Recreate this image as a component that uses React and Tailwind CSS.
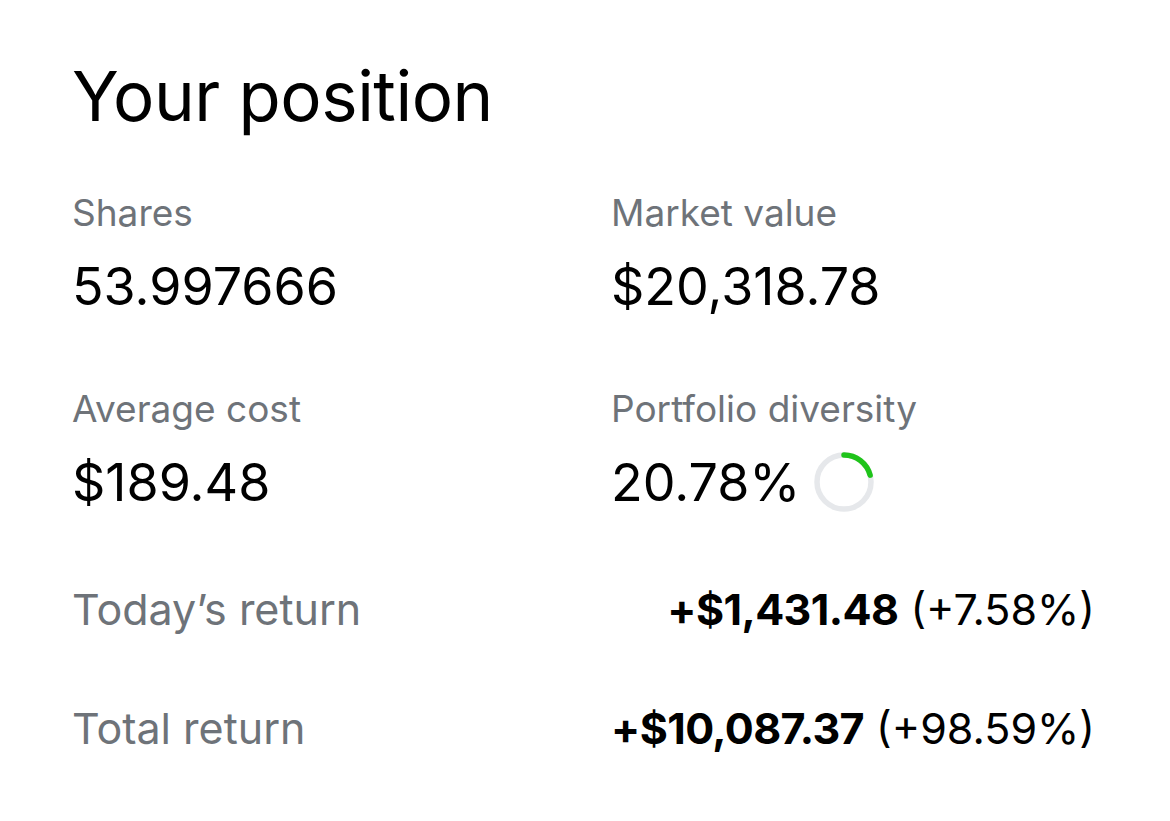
import React from "react";

function Donut() {
  const r = 27;
  const c = 2 * Math.PI * r;
  const pct = 0.2078;
  return (
    <svg width="60" height="60" viewBox="0 0 60 60" className="ml-[14px] -mt-[3px] shrink-0">
      <circle cx="30" cy="30" r={r} fill="none" stroke="#e6e8eb" strokeWidth="5.5" />
      <circle
        cx="30"
        cy="30"
        r={r}
        fill="none"
        stroke="#1fc41a"
        strokeWidth="5.5"
        strokeLinecap="round"
        strokeDasharray={`${c * pct} ${c}`}
        transform="rotate(-90 30 30)"
      />
    </svg>
  );
}

export default function App() {
  return (
    <div className="w-[1170px] h-[821px] bg-white text-black pl-[72px] pr-[75px] pt-[56px] font-['Inter',sans-serif]">
      <h1 className="text-[69px] leading-[80px] font-normal tracking-[-0.5px]">Your position</h1>
      <div className="grid grid-cols-[539px_1fr] mt-[55px]">
        <div>
          <div className="text-[37px] leading-[44px] text-[#6e7379]">Shares</div>
          <div className="text-[52px] leading-[60px] mt-[22px]">53.997666</div>
        </div>
        <div>
          <div className="text-[37px] leading-[44px] text-[#6e7379]">Market value</div>
          <div className="text-[52px] leading-[60px] mt-[22px]">$20,318.78</div>
        </div>
        <div className="mt-[70px]">
          <div className="text-[37px] leading-[44px] text-[#6e7379]">Average cost</div>
          <div className="text-[52px] leading-[60px] mt-[22px]">$189.48</div>
        </div>
        <div className="mt-[70px]">
          <div className="text-[37px] leading-[44px] text-[#6e7379]">Portfolio diversity</div>
          <div className="flex items-center mt-[22px] h-[60px]">
            <span className="text-[52px] leading-[60px]">20.78%</span>
            <Donut />
          </div>
        </div>
      </div>
      <div className="flex justify-between mt-[70px] text-[43px] leading-[52px]">
        <span className="text-[#6e7379]">Today’s return</span>
        <span><span className="font-bold tracking-[-0.6px]">+$1,431.48</span> (+7.58%)</span>
      </div>
      <div className="flex justify-between mt-[67px] text-[43px] leading-[52px]">
        <span className="text-[#6e7379]">Total return</span>
        <span><span className="font-bold tracking-[-0.6px]">+$10,087.37</span> (+98.59%)</span>
      </div>
    </div>
  );
}
